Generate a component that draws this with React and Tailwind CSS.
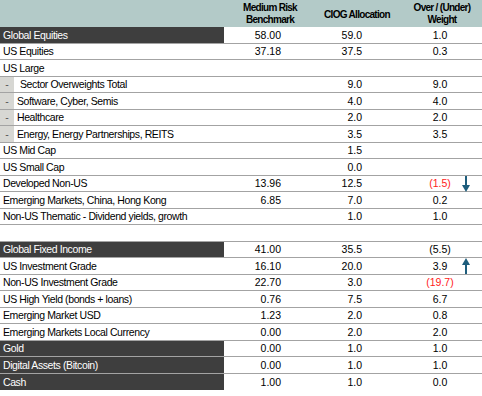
const rows = [
  { label: "Global Equities", dark: true, b: "58.00", c: "59.0", o: "1.0" },
  { label: "US Equities", b: "37.18", c: "37.5", o: "0.3" },
  { label: "US Large" },
  { label: "Sector Overweights Total", sub: true, extra: true, c: "9.0", o: "9.0" },
  { label: "Software, Cyber, Semis", sub: true, c: "4.0", o: "4.0" },
  { label: "Healthcare", sub: true, c: "2.0", o: "2.0" },
  { label: "Energy, Energy Partnerships, REITS", sub: true, c: "3.5", o: "3.5" },
  { label: "US Mid Cap", c: "1.5" },
  { label: "US Small Cap", c: "0.0" },
  { label: "Developed Non-US", b: "13.96", c: "12.5", o: "(1.5)", red: true, arrow: "down" },
  { label: "Emerging Markets, China, Hong Kong", b: "6.85", c: "7.0", o: "0.2" },
  { label: "Non-US Thematic - Dividend yields, growth", c: "1.0", o: "1.0" },
  { label: "" },
  { label: "Global Fixed Income", dark: true, b: "41.00", c: "35.5", o: "(5.5)" },
  { label: "US Investment Grade", b: "16.10", c: "20.0", o: "3.9", arrow: "up" },
  { label: "Non-US Investment Grade", b: "22.70", c: "3.0", o: "(19.7)", red: true },
  { label: "US High Yield (bonds + loans)", b: "0.76", c: "7.5", o: "6.7" },
  { label: "Emerging Market USD", b: "1.23", c: "2.0", o: "0.8" },
  { label: "Emerging Markets Local Currency", b: "0.00", c: "2.0", o: "2.0" },
  { label: "Gold", dark: true, b: "0.00", c: "1.0", o: "1.0" },
  { label: "Digital Assets (Bitcoin)", dark: true, b: "0.00", c: "1.0", o: "1.0" },
  { label: "Cash", dark: true, b: "1.00", c: "1.0", o: "0.0", last: true },
];

function Arrow({ dir }) {
  return (
    <svg width="8" height="16" viewBox="0 0 8 16" className="absolute right-[12px] top-0">
      {dir === "down" ? (
        <>
          <line x1="4" y1="0" x2="4" y2="10" stroke="#1d5d7c" strokeWidth="2" />
          <polygon points="0,9 8,9 4,16" fill="#1d5d7c" />
        </>
      ) : (
        <>
          <line x1="4" y1="6" x2="4" y2="16" stroke="#1d5d7c" strokeWidth="2" />
          <polygon points="0,7 8,7 4,0" fill="#1d5d7c" />
        </>
      )}
    </svg>
  );
}

function Row({ r }) {
  return (
    <div
      className={`grid grid-cols-[224px_92px_82px_84px] h-[16.5px] text-[10.5px] leading-none ${
        r.last ? "" : "border-b border-[#a3a3a3]"
      }`}
    >
      <div className={`flex items-center h-full ${r.dark ? "bg-[#3e3e3e] text-white" : "text-black"}`}>
        {r.sub && (
          <div className="w-[14px] h-full bg-[#d7d7d3] flex items-center justify-center text-[#555]">-</div>
        )}
        <span
          className={`tracking-[-0.4px] whitespace-nowrap ${
            r.sub ? (r.extra ? "pl-[6px]" : "pl-[3px]") : "pl-[3px]"
          }`}
        >
          {r.label}
        </span>
      </div>
      <div className="flex items-center justify-end pr-[35px]">{r.b}</div>
      <div className="flex items-center justify-end pr-[36px]">{r.c}</div>
      <div className="relative flex items-center justify-center">
        <span className={r.red ? "text-[#ff1a1a]" : ""}>{r.o}</span>
        {r.arrow && <Arrow dir={r.arrow} />}
      </div>
    </div>
  );
}

export default function App() {
  return (
    <div className="w-[482px] h-[396px] bg-white font-['Liberation_Sans',Arial,sans-serif] text-black overflow-hidden">
      <div className="grid grid-cols-[224px_92px_82px_84px] h-[27px] bg-[#b3cac8] text-[10px] font-bold leading-[12px] tracking-[-0.7px]">
        <div />
        <div className="flex flex-col items-center justify-center">
          <span>Medium Risk</span>
          <span>Benchmark</span>
        </div>
        <div className="flex items-center justify-center pt-[2px]">CIOG Allocation</div>
        <div className="flex flex-col items-center justify-center pl-[4px]">
          <span>Over / (Under)</span>
          <span>Weight</span>
        </div>
      </div>
      {rows.map((r, i) => (
        <Row key={i} r={r} />
      ))}
    </div>
  );
}
